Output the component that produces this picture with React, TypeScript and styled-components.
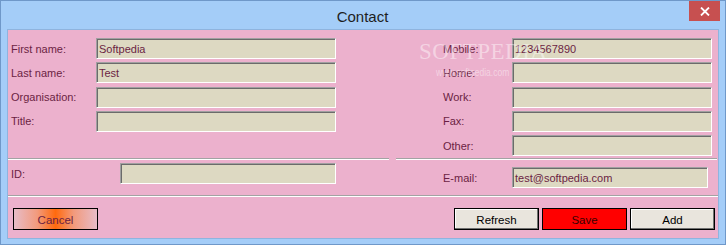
import React from "react";
import styled, { createGlobalStyle } from "styled-components";

const Global = createGlobalStyle`
  html, body { margin: 0; padding: 0; background: #ffffff; }
  #root { width: 726px; height: 245px; }
`;

const Window = styled.div`
  position: relative;
  box-sizing: border-box;
  width: 726px;
  height: 245px;
  border: 1px solid #6f98c9;
  background: #a4cdf8;
  display: flex;
  flex-direction: column;
  font-family: "Liberation Sans", Arial, sans-serif;
  overflow: hidden;
`;

const TitleBar = styled.div`
  height: 28px;
  flex: none;
  display: flex;
  align-items: center;
  justify-content: center;
  position: relative;
`;

const Title = styled.div`
  font-family: "Liberation Sans", Arial, sans-serif;
  font-size: 15px;
  color: #1e1e1e;
  margin-top: 2px;
  margin-left: -1px;
`;

const CloseButton = styled.div`
  position: absolute;
  top: 0;
  right: 5px;
  width: 31px;
  height: 20px;
  background: #c75050;
  display: flex;
  align-items: center;
  justify-content: center;
`;

const Panel = styled.div`
  box-sizing: border-box;
  margin: 0 6px;
  height: 210px;
  border: 1px solid #8fb4de;
  background: #ecb1cd;
  display: flex;
  flex-direction: column;
`;

const Etched = styled.div`
  border-bottom: 1px solid #a3a3a3;
  box-shadow: 0 1px 0 #ffffff;
  margin-bottom: 1px;
`;

const TopSection = styled.div`
  display: flex;
  gap: 7px;
  height: 131px;
  flex: none;
`;

const Column = styled(Etched)<{ $w: number; $pl: number; $label: number; $input: number }>`
  box-sizing: border-box;
  width: ${(p) => p.$w}px;
  padding: 8px 0 0 ${(p) => p.$pl}px;
  display: grid;
  grid-template-columns: ${(p) => p.$label}px ${(p) => p.$input}px;
  grid-auto-rows: 21px;
  row-gap: 3.25px;
  align-content: start;
  height: 129px;
`;

const Label = styled.div`
  font-size: 11px;
  color: #6b1f43;
  display: flex;
  align-items: center;
  white-space: nowrap;
`;

const Field = styled.div<{ $w?: number }>`
  box-sizing: border-box;
  height: 21px;
  width: ${(p) => (p.$w ? `${p.$w}px` : "100%")};
  background: #ddd9c2;
  border-top: 1px solid #a0a0a0;
  border-left: 1px solid #a0a0a0;
  border-right: 1px solid #ffffff;
  border-bottom: 1px solid #ffffff;
  box-shadow: inset 1px 1px 0 #6b6b6b;
  font-size: 11px;
  color: #6b1f43;
  padding: 0 0 0 2px;
  display: flex;
  align-items: center;
  white-space: nowrap;
`;

const MiddleSection = styled(Etched)`
  height: 34px;
  flex: none;
  display: flex;
`;

const MidGroup = styled.div<{ $w: number; $pl: number; $top: number }>`
  box-sizing: border-box;
  width: ${(p) => p.$w}px;
  padding: ${(p) => p.$top}px 0 0 ${(p) => p.$pl}px;
  display: flex;
  align-items: flex-start;
`;

const MidLabel = styled(Label)<{ $w: number }>`
  width: ${(p) => p.$w}px;
  height: 21px;
  flex: none;
`;

const BottomSection = styled.div`
  flex: 1;
  display: flex;
  justify-content: space-between;
  align-items: flex-start;
  padding: 11px 3px 0 5px;
`;

const ButtonGroup = styled.div`
  display: flex;
  gap: 3px;
`;

const Button = styled.div<{ $variant?: "plain" | "save" | "cancel" }>`
  box-sizing: border-box;
  width: 85px;
  height: 22px;
  border: 1px solid #000000;
  display: flex;
  align-items: center;
  justify-content: center;
  font-size: 11.5px;
  padding-top: 1px;
  color: ${(p) => (p.$variant === "cancel" ? "#6b1f43" : p.$variant === "save" ? "#3a0000" : "#000000")};
  background: ${(p) =>
    p.$variant === "save"
      ? "#ff0000"
      : p.$variant === "cancel"
      ? "linear-gradient(to right, #e7bcc8 0%, #f29a7c 28%, #ff6a0e 50%, #f29a7c 72%, #e7bcc8 100%)"
      : "#e9e5dd"};
  box-shadow: ${(p) =>
    p.$variant === "plain" ? "inset -1px -1px 0 #707070, inset 1px 1px 0 #ffffff" : "none"};
`;

const Watermark = styled.div`
  position: absolute;
  left: 418px;
  top: 38px;
  font-family: "Liberation Serif", "Times New Roman", serif;
  font-size: 23px;
  letter-spacing: 0.5px;
  color: rgba(255, 255, 255, 0.45);
  pointer-events: none;
`;

const Tm = styled.span`
  font-family: "Liberation Sans", Arial, sans-serif;
  font-size: 6px;
  vertical-align: top;
  letter-spacing: 0;
`;

const WatermarkUrl = styled.div`
  position: absolute;
  left: 435px;
  top: 66px;
  font-family: "Liberation Sans", Arial, sans-serif;
  font-size: 10px;
  transform: scaleX(0.85);
  transform-origin: left;
  color: rgba(255, 255, 255, 0.45);
  pointer-events: none;
`;

const leftRows = [
  { label: "First name:", value: "Softpedia" },
  { label: "Last name:", value: "Test" },
  { label: "Organisation:", value: "" },
  { label: "Title:", value: "" },
];

const rightRows = [
  { label: "Mobile:", value: "1234567890" },
  { label: "Home:", value: "" },
  { label: "Work:", value: "" },
  { label: "Fax:", value: "" },
  { label: "Other:", value: "" },
];

export default function App() {
  return (
    <>
      <Global />
      <Window>
        <TitleBar>
          <Title>Contact</Title>
          <CloseButton>
            <svg width="10" height="9" viewBox="0 0 10 9">
              <path d="M1 0.5 L9 8.5 M9 0.5 L1 8.5" stroke="#ffffff" strokeWidth="1.8" />
            </svg>
          </CloseButton>
        </TitleBar>
        <Panel>
          <TopSection>
            <Column $w={381} $pl={3} $label={85} $input={240}>
              {leftRows.map((r) => (
                <React.Fragment key={r.label}>
                  <Label>{r.label}</Label>
                  <Field>{r.value}</Field>
                </React.Fragment>
              ))}
            </Column>
            <Column $w={321} $pl={47} $label={69} $input={200}>
              {rightRows.map((r) => (
                <React.Fragment key={r.label}>
                  <Label>{r.label}</Label>
                  <Field>{r.value}</Field>
                </React.Fragment>
              ))}
            </Column>
          </TopSection>
          <MiddleSection>
            <MidGroup $w={388} $pl={3} $top={2}>
              <MidLabel $w={109}>ID:</MidLabel>
              <Field $w={216} />
            </MidGroup>
            <MidGroup $w={321} $pl={47} $top={6}>
              <MidLabel $w={69}>E-mail:</MidLabel>
              <Field $w={196}>test@softpedia.com</Field>
            </MidGroup>
          </MiddleSection>
          <BottomSection>
            <Button $variant="cancel">Cancel</Button>
            <ButtonGroup>
              <Button $variant="plain">Refresh</Button>
              <Button $variant="save">Save</Button>
              <Button $variant="plain">Add</Button>
            </ButtonGroup>
          </BottomSection>
        </Panel>
        <Watermark>
          SOFTPEDIA<Tm>™</Tm>
        </Watermark>
        <WatermarkUrl>www.softpedia.com</WatermarkUrl>
      </Window>
    </>
  );
}
